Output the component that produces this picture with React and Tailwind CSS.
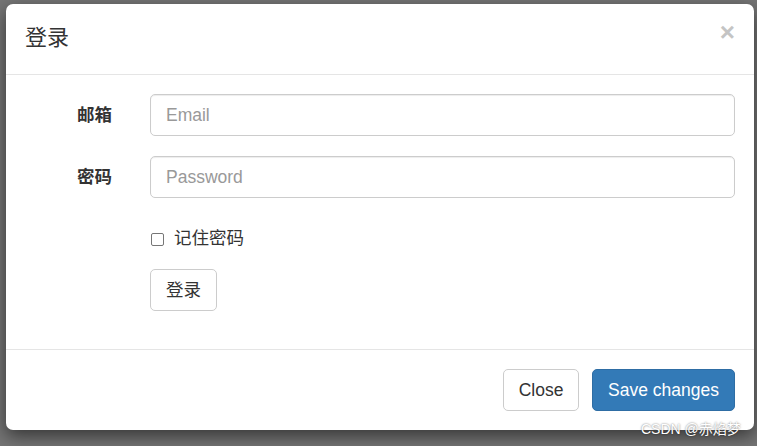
import React from "react";

const font = "font-['Liberation_Sans','Noto_Sans_CJK_SC',sans-serif]";

export default function App() {
  return (
    <div className={`relative w-[757px] h-[446px] overflow-hidden bg-[#757575] ${font} text-[#333]`}>
      <div className="pl-[6px] pt-[4px]">
        <div className="w-[748px] h-[426px] bg-white rounded-[7px] shadow-[0_6px_18px_rgba(0,0,0,0.55)] flex flex-col">
          {/* Header */}
          <div className="h-[71px] border-b border-[#e5e5e5] px-[19px] flex items-center justify-between">
            <h4 className="text-[22px] leading-[32px] text-[#333] pb-[2px]">登录</h4>
            <span className="text-[26px] font-bold leading-none text-[#c4c4c4] -mt-[14px]">×</span>
          </div>

          {/* Body */}
          <div className="flex-1 px-[19px] pt-[19px] border-b border-[#e5e5e5]">
            <div className="flex mb-[20px]">
              <label className="w-[106px] pr-[19px] text-right font-bold text-[17.5px] leading-[42px]">邮箱</label>
              <div className="flex-1 pl-[19px]">
                <div className="h-[42px] border border-[#ccc] rounded-[5px] px-[15px] flex items-center text-[17.5px] text-[#999] shadow-[inset_0_1px_1px_rgba(0,0,0,0.075)]">
                  Email
                </div>
              </div>
            </div>
            <div className="flex mb-[19px]">
              <label className="w-[106px] pr-[19px] text-right font-bold text-[17.5px] leading-[42px]">密码</label>
              <div className="flex-1 pl-[19px]">
                <div className="h-[42px] border border-[#ccc] rounded-[5px] px-[15px] flex items-center text-[17.5px] text-[#999] shadow-[inset_0_1px_1px_rgba(0,0,0,0.075)]">
                  Password
                </div>
              </div>
            </div>
            <div className="pl-[125px] pt-[9px] mb-[18px] flex items-center h-[34px]">
              <span className="w-[13px] h-[13px] border border-[#767676] rounded-[2px] ml-[1px] mt-[1px]"></span>
              <span className="ml-[10px] text-[17.5px] leading-[25px]">记住密码</span>
            </div>
            <div className="pl-[125px]">
              <div className="inline-flex items-center justify-center w-[67px] h-[42px] border border-[#ccc] rounded-[5px] text-[17.5px] bg-white">
                登录
              </div>
            </div>
          </div>

          {/* Footer */}
          <div className="h-[80px] px-[19px] flex items-center justify-end gap-[13px]">
            <div className="w-[76px] h-[42px] border border-[#ccc] rounded-[5px] flex items-center justify-center text-[17.5px] text-[#333] bg-white">
              Close
            </div>
            <div className="w-[143px] h-[42px] border border-[#2e6da4] rounded-[5px] flex items-center justify-center text-[17.5px] text-white bg-[#337ab7]">
              Save changes
            </div>
          </div>
        </div>
      </div>

      {/* watermark */}
      <span className="absolute left-[641px] top-[419px] text-[14px] leading-[20px] text-white [text-shadow:0_0_2px_rgba(0,0,0,0.6)]">
        CSDN @赤焰梦
      </span>
    </div>
  );
}
